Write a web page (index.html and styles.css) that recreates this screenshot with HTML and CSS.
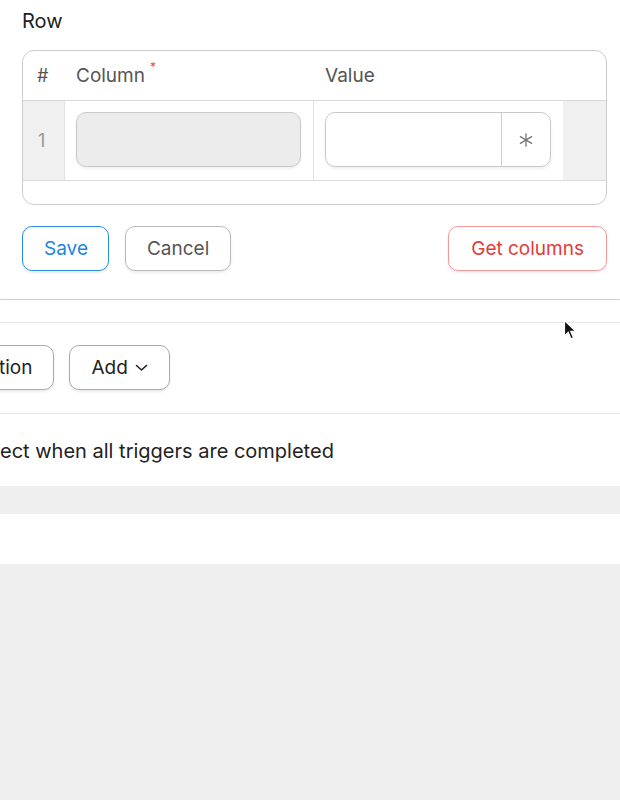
FILE: index.html
```html
<!DOCTYPE html>
<html lang="en">
<head>
    <meta charset="UTF-8">
    <meta name="viewport" content="width=device-width, initial-scale=1.0">
    <title>Row editor</title>
    <link rel="stylesheet" href="styles.css">
</head>
<body>
    <div class="panel">
        <div class="field-label">Row</div>

        <div class="grid-card">
            <div class="grid-head">
                <div class="cell-num">#</div>
                <div class="cell-col">Column<span class="req">*</span></div>
                <div class="cell-val">Value</div>
                <div class="cell-end"></div>
            </div>
            <div class="grid-row">
                <div class="cell-num idx">1</div>
                <div class="cell-col line">
                    <div class="input input-disabled"></div>
                </div>
                <div class="cell-val">
                    <div class="input input-group">
                        <div class="input-field"></div>
                        <div class="input-addon">
                            <svg width="14" height="14" viewBox="0 0 14 14">
                                <g stroke="#777" stroke-width="1.3" stroke-linecap="round">
                                    <line x1="7" y1="0.8" x2="7" y2="13.2"/>
                                    <line x1="1.4" y1="3.6" x2="12.6" y2="10.4"/>
                                    <line x1="1.4" y1="10.4" x2="12.6" y2="3.6"/>
                                </g>
                            </svg>
                        </div>
                    </div>
                </div>
                <div class="cell-end shade"></div>
            </div>
            <div class="grid-foot"></div>
        </div>

        <div class="actions">
            <button class="btn btn-primary">Save</button>
            <button class="btn">Cancel</button>
            <div class="spacer"></div>
            <button class="btn btn-danger">Get columns</button>
        </div>
    </div>

    <div class="gap"></div>

    <div class="toolbar">
        <button class="btn btn-dark btn-cut">tion</button>
        <button class="btn btn-dark">Add
            <svg class="chev" width="13" height="8" viewBox="0 0 13 8"><polyline points="1.5,1.5 6.5,6 11.5,1.5" fill="none" stroke="#222" stroke-width="1.6" stroke-linecap="round" stroke-linejoin="round"/></svg>
        </button>
    </div>

    <div class="option">ect when all triggers are completed</div>

    <div class="band"></div>
    <div class="blank"></div>

    <svg class="cursor" width="15" height="23" viewBox="0 0 15 23">
        <path d="M1.5 1.5 L1.5 17 L5.2 13.4 L8 19.8 L10.5 18.7 L7.7 12.4 L12.8 12.4 Z" fill="#111" stroke="#fff" stroke-width="1.2"/>
    </svg>
</body>
</html>
```

FILE: styles.css
```css
* {
    margin: 0;
    padding: 0;
    box-sizing: border-box;
}

body {
    font-family: Inter, "Noto Sans", sans-serif;
    background-color: #efefef;
    width: 620px;
    min-height: 800px;
    overflow: hidden;
    position: relative;
    color: #222;
}

/* Top panel, its left and right edges run off the screen */
.panel {
    background-color: #fff;
    margin: 0 -10px;
    border: 1px solid #cfcfcf;
    border-top: none;
    border-radius: 0 0 12px 12px;
    padding: 10px 22px 28px 31px;
}

.field-label {
    font-size: 20px;
    line-height: 22px;
    color: #222;
    margin-bottom: 18px;
}

.grid-card {
    border: 1px solid #cdcdcd;
    border-radius: 12px;
    overflow: hidden;
}

.grid-head,
.grid-row {
    display: grid;
    grid-template-columns: 42px 249px 249px 1fr;
}

.grid-head {
    height: 50px;
    align-items: center;
    border-bottom: 1px solid #d8d8d8;
    font-size: 19px;
    color: #555;
}

.grid-head .cell-num {
    padding-left: 14px;
    font-size: 18px;
}

.grid-head .cell-col,
.grid-head .cell-val {
    padding-left: 11px;
}

.req {
    color: #e44;
    font-size: 12px;
    vertical-align: top;
    position: relative;
    top: -5px;
    margin-left: 5px;
}

.grid-row {
    height: 80px;
    border-bottom: 1px solid #dcdcdc;
}

.idx {
    background-color: #f0f0f0;
    border-right: 1px solid #e2e2e2;
    color: #999;
    font-size: 18px;
    display: flex;
    align-items: center;
    padding-left: 15px;
}

.grid-row .cell-col,
.grid-row .cell-val {
    padding: 11px 12px 0 11px;
}

.line {
    border-right: 1px solid #e2e2e2;
}

.shade {
    background-color: #f0f0f0;
}

.input {
    height: 55px;
    border: 1px solid #c9c9c9;
    border-radius: 10px;
    box-shadow: 0 2px 3px rgba(0, 0, 0, 0.06);
}

.input-disabled {
    background-color: #ececec;
}

.input-group {
    display: flex;
    background-color: #fff;
    overflow: hidden;
}

.input-field {
    flex: 1;
}

.input-addon {
    width: 49px;
    border-left: 1px solid #cfcfcf;
    display: flex;
    align-items: center;
    justify-content: center;
}

.grid-foot {
    height: 23px;
}

.actions {
    display: flex;
    gap: 16px;
    margin-top: 21px;
}

.spacer {
    flex: 1;
}

.btn {
    font-family: Inter, "Noto Sans", sans-serif;
    font-size: 19px;
    height: 45px;
    padding: 0 21px;
    background-color: #fff;
    border: 1px solid #b9b9b9;
    border-radius: 10px;
    color: #555;
    box-shadow: 0 2px 3px rgba(0, 0, 0, 0.08);
    display: flex;
    align-items: center;
}

.btn-primary {
    color: #1a86e0;
    border-color: #2b8ce6;
    padding: 0 20px 0 21px;
}

.btn-danger {
    color: #e23b3b;
    border-color: #f29a9a;
    padding: 0 22px;
}

.btn-dark {
    color: #222;
    border-color: #aaa;
}

.btn-cut {
    margin-left: -32px;
    padding-left: 30px;
}

.chev {
    margin-left: 7px;
}

.gap {
    height: 22px;
    background-color: #fff;
}

.toolbar {
    background-color: #fff;
    border-top: 1px solid #e3e3e3;
    border-bottom: 1px solid #e3e3e3;
    display: flex;
    gap: 15px;
    padding: 22px 0 23px;
}

.option {
    background-color: #fff;
    height: 72px;
    display: flex;
    align-items: center;
    font-size: 20px;
    padding-top: 2px;
}

.band {
    height: 28px;
}

.blank {
    height: 50px;
    background-color: #fff;
}

.cursor {
    position: absolute;
    left: 563px;
    top: 319px;
}
```
